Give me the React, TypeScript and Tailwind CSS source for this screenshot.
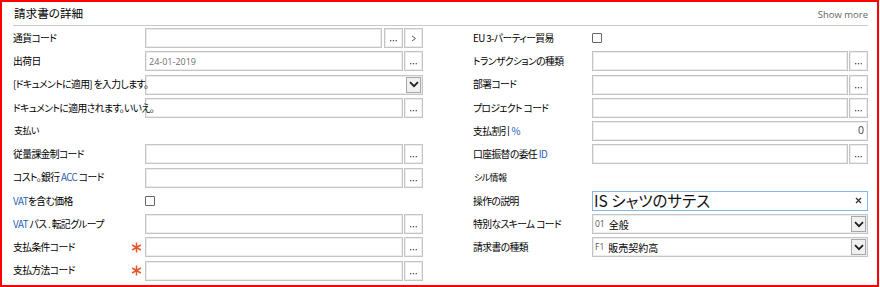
import React from 'react'

type Field =
  | { kind: 'input'; value?: string; muted?: boolean; align?: 'right'; buttons?: ('dots' | 'next')[] }
  | { kind: 'select'; code?: string; value?: string }
  | { kind: 'check' }
  | { kind: 'focus'; value: string }
  | { kind: 'none' }

type Row = { label: React.ReactNode; section?: boolean; required?: boolean; field: Field }

const jp = "font-['Noto_Sans_CJK_JP',sans-serif] [font-feature-settings:'palt']"
const blue = 'text-[#1f5fb4]'

const leftRows: Row[] = [
  { label: '通貨コード', field: { kind: 'input', buttons: ['dots', 'next'] } },
  { label: '出荷日', field: { kind: 'input', value: '24-01-2019', muted: true, buttons: ['dots'] } },
  { label: '[ドキュメントに適用] を入力します。', field: { kind: 'select' } },
  { label: 'ドキュメントに適用されます。いいえ。', field: { kind: 'input', buttons: ['dots'] } },
  { label: '支払い', section: true, field: { kind: 'none' } },
  { label: '従量課金制コード', field: { kind: 'input', buttons: ['dots'] } },
  {
    label: (
      <>
        コスト。銀行 <span className={blue}>ACC</span> コード
      </>
    ),
    field: { kind: 'input', buttons: ['dots'] },
  },
  {
    label: (
      <>
        <span className={blue}>VAT</span>を含む価格
      </>
    ),
    field: { kind: 'check' },
  },
  {
    label: (
      <>
        <span className={blue}>VAT</span> パス . 転記グループ
      </>
    ),
    field: { kind: 'input', buttons: ['dots'] },
  },
  { label: '支払条件コード', required: true, field: { kind: 'input', buttons: ['dots'] } },
  { label: '支払方法コード', required: true, field: { kind: 'input', buttons: ['dots'] } },
]

const rightRows: Row[] = [
  { label: 'EU 3-パーティー貿易', field: { kind: 'check' } },
  { label: 'トランザクションの種類', field: { kind: 'input', buttons: ['dots'] } },
  { label: '部署コード', field: { kind: 'input', buttons: ['dots'] } },
  { label: 'プロジェクト コード', field: { kind: 'input', buttons: ['dots'] } },
  {
    label: (
      <>
        支払割引 <span className={blue}>%</span>
      </>
    ),
    field: { kind: 'input', value: '0', align: 'right' },
  },
  {
    label: (
      <>
        口座振替の委任 <span className={blue}>ID</span>
      </>
    ),
    field: { kind: 'input', buttons: ['dots'] },
  },
  { label: 'シル情報', section: true, field: { kind: 'none' } },
  { label: '操作の説明', field: { kind: 'focus', value: 'IS シャツのサテス' } },
  { label: '特別なスキーム コード', field: { kind: 'select', code: '01', value: '全般' } },
  { label: '請求書の種類', field: { kind: 'select', code: 'F1', value: '販売契約高' } },
  { label: '', field: { kind: 'none' } },
]

const boxCls = 'h-[20px] border border-[#c4c4c4] bg-white shadow-[inset_0_0_0_1px_#ececec]'

function Chevron() {
  return (
    <div className="w-[15px] h-[16px] border border-[#a8a8a8] bg-[#f0f0f0] flex items-center justify-center">
      <svg width="10" height="7" viewBox="0 0 10 7">
        <path d="M1 1.2 L5 5.2 L9 1.2" fill="none" stroke="#1a1a1a" strokeWidth="1.7" />
      </svg>
    </div>
  )
}

function SideButton({ kind }: { kind: 'dots' | 'next' }) {
  return (
    <div className={`${boxCls} w-[19px] shrink-0 flex justify-center ${kind === 'dots' ? 'items-end pb-[5px]' : 'items-center'}`}>
      {kind === 'dots' ? (
        <svg width="7" height="2" viewBox="0 0 7 2">
          <rect x="0" y="0" width="1.3" height="1.3" fill="#555" />
          <rect x="2.8" y="0" width="1.3" height="1.3" fill="#555" />
          <rect x="5.6" y="0" width="1.3" height="1.3" fill="#555" />
        </svg>
      ) : (
        <svg width="6" height="7" viewBox="0 0 6 7">
          <path d="M1 1 L4.5 3.5 L1 6" fill="none" stroke="#555" strokeWidth="1" />
        </svg>
      )}
    </div>
  )
}

function FieldView({ field }: { field: Field }) {
  if (field.kind === 'none') return null
  if (field.kind === 'check') {
    return <div className="w-[10px] h-[10px] border border-[#666] rounded-[1px] bg-white" />
  }
  if (field.kind === 'select') {
    return (
      <div className={`${boxCls} w-full flex items-center justify-between pl-[2px] pr-[1px]`}>
        <div className="flex items-center gap-[4px]">
          {field.code && <span className="font-['Open_Sans',sans-serif] text-[8.5px] text-[#555]">{field.code}</span>}
          {field.value && <span className={`${jp} text-[10px] text-black`}>{field.value}</span>}
        </div>
        <Chevron />
      </div>
    )
  }
  if (field.kind === 'focus') {
    return (
      <div className="h-[20px] w-full border border-[#86b6e4] bg-white flex items-center justify-between pl-[1px] pr-[5px]">
        <span className={`${jp} text-[15.5px] leading-none text-[#111]`}>{field.value}</span>
        <svg width="7" height="7" viewBox="0 0 7 7">
          <path d="M1 1 L6 6 M6 1 L1 6" stroke="#333" strokeWidth="1.3" />
        </svg>
      </div>
    )
  }
  return (
    <div className="w-full flex gap-[1.5px]">
      <div
        className={`${boxCls} flex-1 flex items-center px-[3px] ${field.align === 'right' ? 'justify-end' : ''}`}
      >
        {field.value && (
          <span
            className={`font-['Open_Sans',sans-serif] ${
              field.muted ? 'text-[9px] text-[#6e6e6e]' : 'text-[10.5px] text-[#444]'
            }`}
          >
            {field.value}
          </span>
        )}
      </div>
      {field.buttons?.map((b) => (
        <SideButton key={b} kind={b} />
      ))}
    </div>
  )
}

function Column({ rows, labelW, fieldW }: { rows: Row[]; labelW: string; fieldW: string }) {
  return (
    <div className="flex flex-col">
      {rows.map((r, i) => (
        <div key={i} className="h-[23.25px] flex items-center">
          <div className={`${labelW} shrink-0 flex items-center justify-between`}>
            <span
              className={`${jp} relative z-10 whitespace-nowrap text-black tracking-[-0.6px] ${
                r.section ? 'text-[9px] pl-[1px]' : 'text-[9.8px]'
              }`}
            >
              {r.label}
            </span>
            {r.required && (
              <svg width="11" height="11" viewBox="0 0 11 11" className="mr-[3px]">
                <path d="M5.5 0.5 V10.5 M1.2 3 L9.8 8 M9.8 3 L1.2 8" stroke="#e0582c" strokeWidth="1.5" />
              </svg>
            )}
          </div>
          <div className={`${fieldW} shrink-0 flex items-center`}>
            <FieldView field={r.field} />
          </div>
        </div>
      ))}
    </div>
  )
}

export default function App() {
  return (
    <div className="w-[880px] h-[287px] bg-white">
      <div className="w-[879px] h-[287px] border-2 border-[#ff0000] pl-[11px] pr-[9px]">
        <div className="h-[24px] border-b border-[#c8c8c8] flex items-center justify-between">
          <span className={`${jp} text-[11.6px] text-black pl-[1px]`}>請求書の詳細</span>
          <span className="font-['Open_Sans',sans-serif] text-[9.5px] text-[#666] mt-[4px]">Show more</span>
        </div>
        <div className="flex pt-[0.5px]">
          <Column rows={leftRows} labelW="w-[132px]" fieldW="w-[278px]" />
          <div className="w-[50px] shrink-0" />
          <Column rows={rightRows} labelW="w-[119px]" fieldW="w-[276px]" />
        </div>
      </div>
    </div>
  )
}
